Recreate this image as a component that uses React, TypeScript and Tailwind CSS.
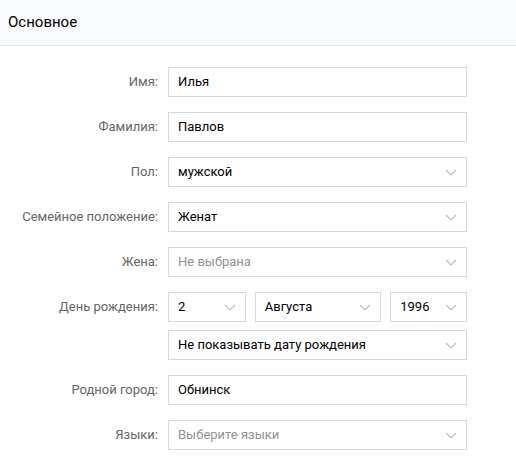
import React from "react";

function Chevron() {
  return (
    <svg width="12" height="7" viewBox="0 0 12 7" className="shrink-0">
      <path d="M1 1l5 5 5-5" fill="none" stroke="#b8bec4" strokeWidth="1.2" />
    </svg>
  );
}

function Field({ value, placeholder, select, className = "" }: { value?: string; placeholder?: string; select?: boolean; className?: string }) {
  return (
    <div className={`h-[30px] border border-[#d3d9de] bg-white flex items-center justify-between pl-[9px] pr-[9px] ${className}`}>
      <span className={value ? "text-black" : "text-[#929292]"}>{value || placeholder}</span>
      {select && <Chevron />}
    </div>
  );
}

function Row({ label, children }: { label: string; children: React.ReactNode }) {
  return (
    <div className="flex">
      <div className="w-[158px] h-[30px] flex items-center justify-end text-[#656565]">{label}</div>
      <div className="ml-[10px] w-[299px] flex flex-col gap-2">{children}</div>
    </div>
  );
}

export default function App() {
  return (
    <div className="w-[516px] h-[460px] bg-white text-[13px]" style={{ fontFamily: "Roboto, 'Open Sans', Arial, sans-serif" }}>
      <div className="h-[46px] bg-[#fafbfc] border-b border-[#e7e8ec] flex items-center pl-2 pb-[1px] text-[15px] text-black">
        Основное
      </div>

      <div className="pt-[21px] flex flex-col gap-[15px]">
        <Row label="Имя:">
          <Field value="Илья" />
        </Row>
        <Row label="Фамилия:">
          <Field value="Павлов" />
        </Row>
        <Row label="Пол:">
          <Field value="мужской" select />
        </Row>
        <Row label="Семейное положение:">
          <Field value="Женат" select />
        </Row>
        <Row label="Жена:">
          <Field placeholder="Не выбрана" select />
        </Row>
        <Row label="День рождения:">
          <div className="flex gap-[9px]">
            <Field value="2" select className="w-[78px]" />
            <Field value="Августа" select className="w-[127px]" />
            <Field value="1996" select className="w-[77px]" />
          </div>
          <Field value="Не показывать дату рождения" select />
        </Row>
        <Row label="Родной город:">
          <Field value="Обнинск" />
        </Row>
        <Row label="Языки:">
          <Field placeholder="Выберите языки" select />
        </Row>
      </div>
    </div>
  );
}
